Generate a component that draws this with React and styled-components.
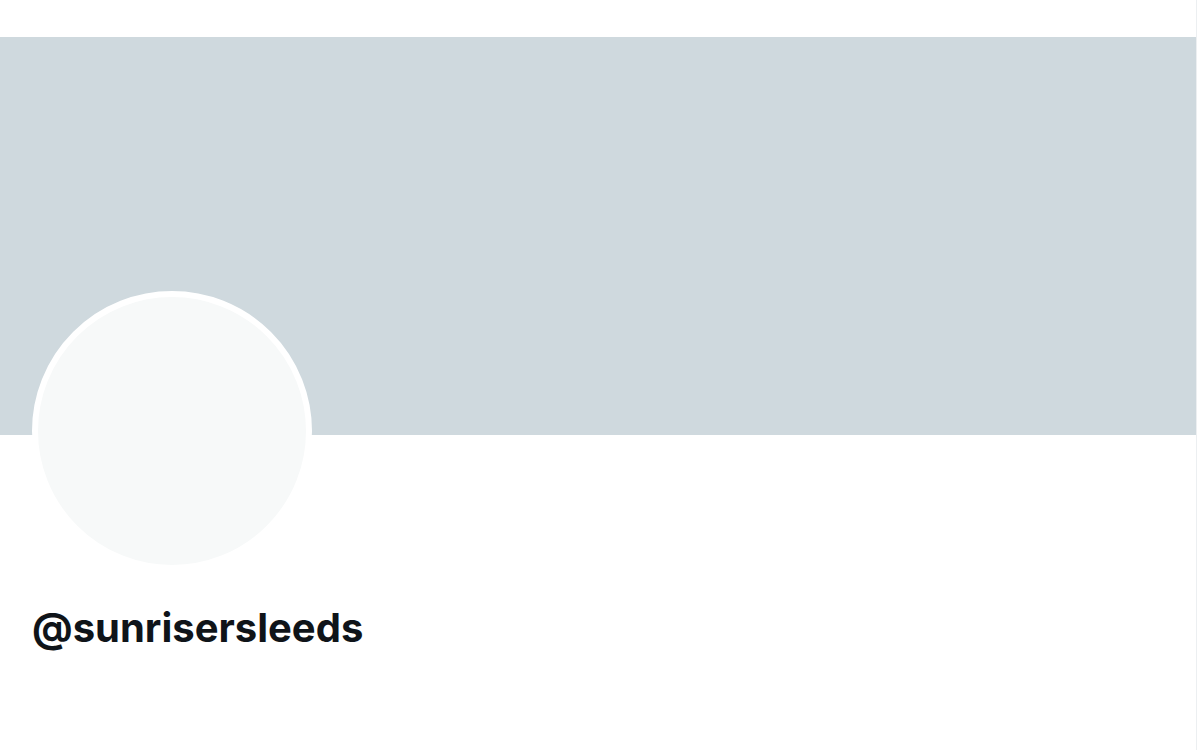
import React from "react";
import styled, { createGlobalStyle } from "styled-components";

const GlobalStyle = createGlobalStyle`
  html, body {
    margin: 0;
    padding: 0;
    background: #ffffff;
    font-family: Inter, "Noto Sans", sans-serif;
    overflow: hidden;
  }
`;

export default function App() {
  return (
    <>
      <GlobalStyle />
      <Page>
        <Column>
          <TopBar />
          <Banner />
          <ProfileArea>
            <Avatar />
            <Handle>@sunrisersleeds</Handle>
          </ProfileArea>
        </Column>
      </Page>
    </>
  );
}

const Page = styled.div`
  width: 1200px;
  height: 750px;
  display: flex;
  background: #fff;
`;

const Column = styled.div`
  width: 1196px;
  height: 100%;
  border-right: 1px solid #eceff1;
  display: flex;
  flex-direction: column;
`;

const TopBar = styled.div`
  height: 37px;
  background: #fff;
`;

const Banner = styled.div`
  height: 398px;
  background-color: #cfd9de;
`;

const ProfileArea = styled.div`
  display: flex;
  flex-direction: column;
  padding: 0 32px;
`;

const Avatar = styled.div`
  width: 268px;
  height: 268px;
  margin-top: -144px;
  border-radius: 50%;
  background: #f7f9f9;
  border: 6px solid #fff;
`;

const Handle = styled.div`
  margin-top: 33px;
  font-family: Inter, "Noto Sans", sans-serif;
  font-size: 40px;
  line-height: 48px;
  font-weight: 700;
  color: #0f1419;
`;
